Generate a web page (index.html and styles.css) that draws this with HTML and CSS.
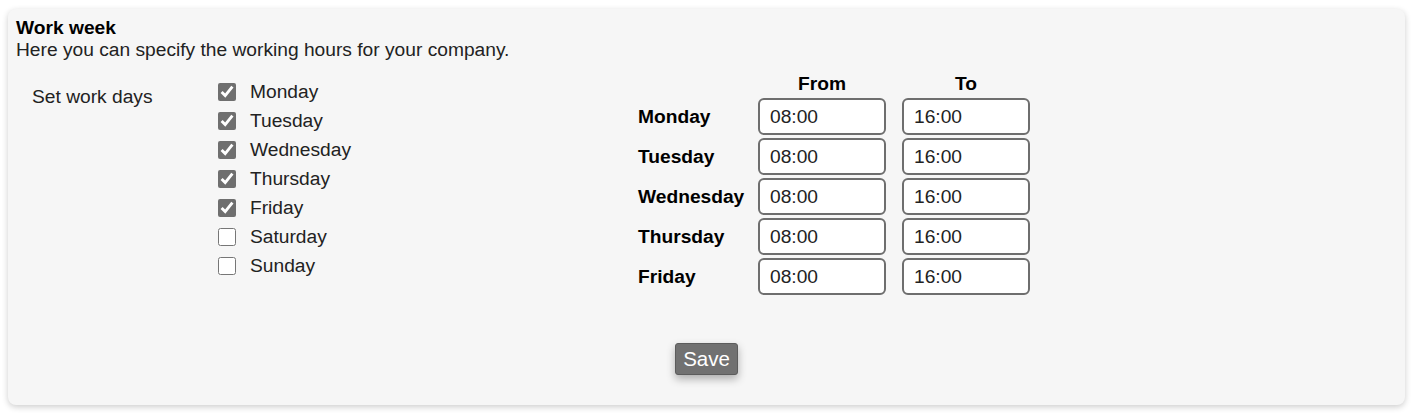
FILE: index.html
```html
<!DOCTYPE html>
<html>
<head>
  <title>Work week</title>
  <meta name="viewport" content="width=device-width, initial-scale=1.0">
  <link rel="stylesheet" href="styles.css">
</head>
<body>
  <div class="card">
    <div class="card-head">
      <div class="title">Work week</div>
      <div class="desc">Here you can specify the working hours for your company.</div>
    </div>

    <div class="main">
      <div class="days">
        <div class="days-label">Set work days</div>
        <div class="day-list">
          <label class="day"><input type="checkbox" checked><span>Monday</span></label>
          <label class="day"><input type="checkbox" checked><span>Tuesday</span></label>
          <label class="day"><input type="checkbox" checked><span>Wednesday</span></label>
          <label class="day"><input type="checkbox" checked><span>Thursday</span></label>
          <label class="day"><input type="checkbox" checked><span>Friday</span></label>
          <label class="day"><input type="checkbox"><span>Saturday</span></label>
          <label class="day"><input type="checkbox"><span>Sunday</span></label>
        </div>
      </div>

      <div class="hours">
        <div></div>
        <div class="col-head">From</div>
        <div class="col-head">To</div>

        <div class="row-label">Monday</div>
        <input class="time" type="text" value="08:00">
        <input class="time" type="text" value="16:00">

        <div class="row-label">Tuesday</div>
        <input class="time" type="text" value="08:00">
        <input class="time" type="text" value="16:00">

        <div class="row-label">Wednesday</div>
        <input class="time" type="text" value="08:00">
        <input class="time" type="text" value="16:00">

        <div class="row-label">Thursday</div>
        <input class="time" type="text" value="08:00">
        <input class="time" type="text" value="16:00">

        <div class="row-label">Friday</div>
        <input class="time" type="text" value="08:00">
        <input class="time" type="text" value="16:00">
      </div>
    </div>

    <div class="footer">
      <button type="button" class="save">Save</button>
    </div>
  </div>
</body>
</html>
```

FILE: styles.css
```css
body {
    font-family: "Liberation Sans", Arial, sans-serif;
    font-size: 19.2px;
    color: #222;
    margin: 0;
    padding: 9px 9px 9px 8px;
    background: #fff;
}

.card {
    background: #f6f6f6;
    border-radius: 8px;
    box-shadow: 0 2px 6px rgba(0, 0, 0, 0.2);
    padding: 8px 8px 30px 8px;
    height: 396px;
    box-sizing: border-box;
}

.title {
    font-weight: bold;
    color: #000;
    line-height: 22px;
}

.desc {
    line-height: 22px;
}

.main {
    display: flex;
    margin-top: 12px;
}

.days {
    display: flex;
    width: 622px;
    padding-left: 16px;
    padding-top: 4px;
    box-sizing: border-box;
}

.days-label {
    width: 186px;
    padding-top: 9px;
    line-height: 22px;
}

.day {
    display: flex;
    align-items: center;
    gap: 14px;
    height: 29px;
}

.day input {
    width: 18px;
    height: 18px;
    margin: 0;
    accent-color: #6f6f6f;
}

.hours {
    display: grid;
    grid-template-columns: 104px 128px 128px;
    grid-template-rows: 22px repeat(5, 37px);
    column-gap: 16px;
    row-gap: 3px;
    align-items: center;
}

.col-head {
    font-weight: bold;
    color: #000;
    text-align: center;
    line-height: 22px;
}

.row-label {
    font-weight: bold;
    color: #000;
    white-space: nowrap;
}

.time {
    width: 128px;
    height: 37px;
    box-sizing: border-box;
    border: 2px solid #6e6e6e;
    border-radius: 6px;
    padding: 0 10px;
    font-family: "Liberation Sans", Arial, sans-serif;
    font-size: 19.2px;
    color: #222;
    background: #fff;
}

.footer {
    display: flex;
    justify-content: center;
    margin-top: 48px;
}

.save {
    height: 32px;
    padding: 0 7px;
    font-family: "Liberation Sans", Arial, sans-serif;
    font-size: 20.5px;
    color: #fff;
    background: #717171;
    border: 1px solid #5c5c5c;
    border-radius: 3px;
    box-shadow: 0 4px 8px rgba(0, 0, 0, 0.3);
    cursor: pointer;
}
```
